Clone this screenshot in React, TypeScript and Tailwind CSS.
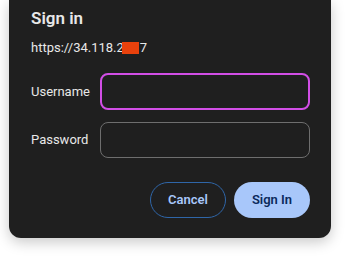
export default function App() {
  return (
    <div className="w-[351px] h-[257px] bg-white overflow-hidden font-['Roboto',sans-serif]">
      <div className="ml-[9px] w-[322px] h-[238px] bg-[#1f1f1f] rounded-b-xl shadow-[0_4px_14px_rgba(0,0,0,0.22)] pl-[22px] pr-[21px] pt-[7px] text-[#e8e8e8]">
        <h1 className="text-[17px] font-semibold leading-[22px]">Sign in</h1>
        <div className="mt-[11px] text-[13px] leading-[16px] flex items-center">
          <span>https://34.118.2</span>
          <span className="w-[17px] h-[12px] -ml-[2px] mr-[1px] -mt-[1px] bg-[#e8410c]" />
          <span>7</span>
        </div>
        <div className="mt-[17px] flex items-center">
          <label className="w-[69px] text-[13px]">Username</label>
          <div className="w-[210px] h-[37px] rounded-lg border-2 border-[#d24ee6] bg-[#1f1f1f]" />
        </div>
        <div className="mt-[12px] flex items-center">
          <label className="w-[69px] text-[13px]">Password</label>
          <div className="w-[210px] h-[36px] rounded-lg border border-[#6e6e6e] bg-[#1f1f1f]" />
        </div>
        <div className="mt-[24px] flex justify-end gap-[8px]">
          <button className="w-[76px] h-[36px] rounded-full border border-[#2f66a8] text-[#a8c7fa] text-[13px] font-semibold">
            Cancel
          </button>
          <button className="w-[76px] h-[36px] rounded-full bg-[#a8c7fa] text-[#0b2a5c] text-[13px] font-semibold">
            Sign In
          </button>
        </div>
      </div>
    </div>
  )
}
